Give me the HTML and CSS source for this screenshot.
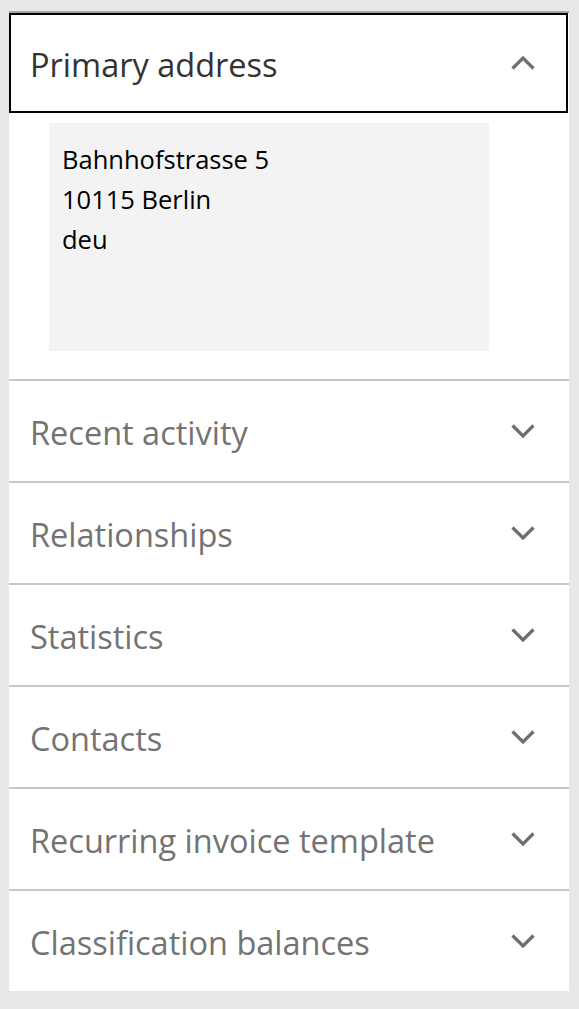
FILE: index.html
```html
<!DOCTYPE html>
<html>
<head>
<meta charset="utf-8">
<link rel="stylesheet" href="styles.css">
</head>
<body>
<div class="panel">
  <section class="group open">
    <div class="head">
      <span class="title">Primary address</span>
      <svg class="chev" width="24" height="14" viewBox="0 0 24 14"><polyline points="1.5,12.5 12,2 22.5,12.5" /></svg>
    </div>
    <div class="body">
      <div class="address">
        <div>Bahnhofstrasse 5</div>
        <div>10115 Berlin</div>
        <div>deu</div>
      </div>
    </div>
  </section>
  <section class="group">
    <div class="head"><span class="title">Recent activity</span><svg class="chev" width="24" height="14" viewBox="0 0 24 14"><polyline points="1.5,1.5 12,12 22.5,1.5" /></svg></div>
  </section>
  <section class="group">
    <div class="head"><span class="title">Relationships</span><svg class="chev" width="24" height="14" viewBox="0 0 24 14"><polyline points="1.5,1.5 12,12 22.5,1.5" /></svg></div>
  </section>
  <section class="group">
    <div class="head"><span class="title">Statistics</span><svg class="chev" width="24" height="14" viewBox="0 0 24 14"><polyline points="1.5,1.5 12,12 22.5,1.5" /></svg></div>
  </section>
  <section class="group">
    <div class="head"><span class="title">Contacts</span><svg class="chev" width="24" height="14" viewBox="0 0 24 14"><polyline points="1.5,1.5 12,12 22.5,1.5" /></svg></div>
  </section>
  <section class="group">
    <div class="head"><span class="title">Recurring invoice template</span><svg class="chev" width="24" height="14" viewBox="0 0 24 14"><polyline points="1.5,1.5 12,12 22.5,1.5" /></svg></div>
  </section>
  <section class="group">
    <div class="head"><span class="title">Classification balances</span><svg class="chev" width="24" height="14" viewBox="0 0 24 14"><polyline points="1.5,1.5 12,12 22.5,1.5" /></svg></div>
  </section>
</div>
</body>
</html>
```
FILE: styles.css
```css
html, body {
  margin: 0;
  padding: 0;
  background: #e8e8e8;
  font-family: "Open Sans", "Noto Sans", sans-serif;
}
body {
  padding: 11px 10px 18px 9px;
}
.panel {
  width: 560px;
  background: #ffffff;
  border-top: 2px solid #a6a6a6;
}
.group + .group {
  border-top: 2px solid #c8c8c8;
}
.head {
  box-sizing: border-box;
  height: 100px;
  display: flex;
  align-items: center;
  justify-content: space-between;
  padding: 0 34px 0 21px;
}
.title {
  font-size: 32.5px;
  color: #737373;
  padding-top: 2px;
}
.open .head {
  border: 2px solid #000000;
  padding: 0 31px 0 19px;
  width: 559px;
}
.open .title {
  color: #333333;
}
.chev {
  display: block;
  fill: none;
  stroke: #6e6e6e;
  stroke-width: 3.2;
}
.body {
  padding: 10px 0 28px 40px;
}
.address {
  box-sizing: border-box;
  width: 440px;
  height: 228px;
  background: #f3f3f3;
  padding: 16px 13px;
  font-size: 25.5px;
  line-height: 40px;
  color: #000000;
}
```
